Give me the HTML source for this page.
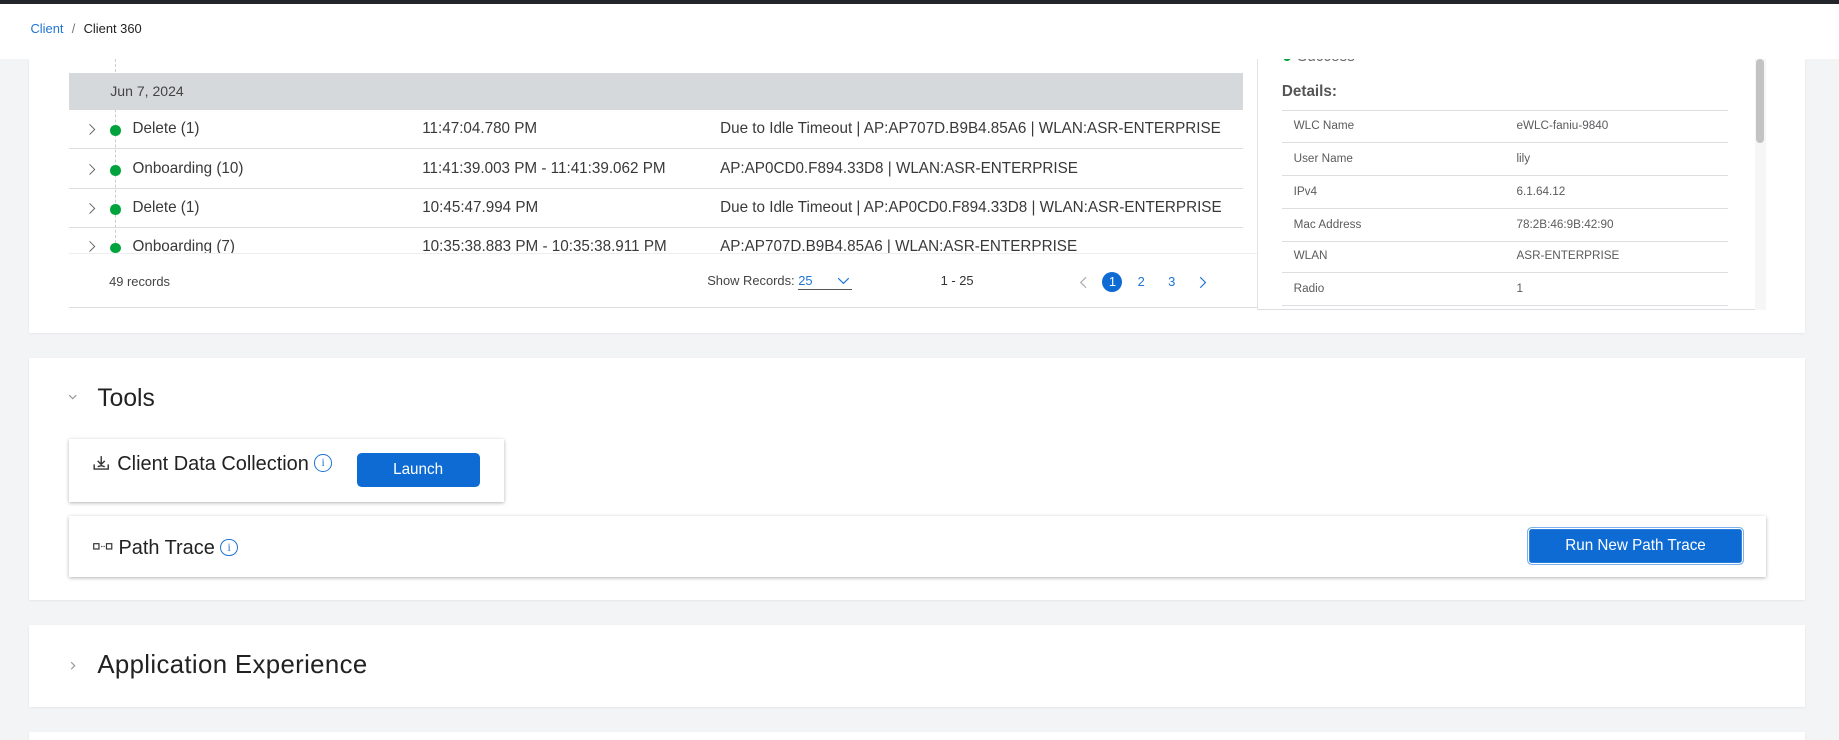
<!DOCTYPE html>
<html><head><meta charset="utf-8"><style>
*{box-sizing:border-box;margin:0;padding:0}
html,body{width:1839px;height:740px;overflow:hidden;background:#f3f4f6}
#w{zoom:1.17283;position:relative;width:1568px;height:631px;font-family:"Liberation Sans",sans-serif;color:#39393b}
.a{position:absolute}
.card{position:absolute;background:#fff;left:25px;width:1514px;box-shadow:0 1px 2px rgba(0,0,0,.08)}
.row{position:absolute;left:59px;width:1001px;height:33px;border-bottom:1px solid #dcdee1;font-size:13px;line-height:33px}
.row span{position:absolute}
.dot{position:absolute;left:35px;top:13px;width:9px;height:9px;border-radius:50%;background:#00a33c}
.chev{position:absolute;left:16px;top:11px}
.dr{position:absolute;left:1093px;width:380px;height:28px;border-bottom:1px solid #dcdee1;font-size:10px;line-height:28px;color:#5a5b5d}
.dr span{position:absolute}
.btn{position:absolute;background:#0d6bd3;color:#fff;border-radius:4px;font-size:13px;text-align:center}
.info{display:inline-block;width:15px;height:15px;border:1.3px solid #1f74d4;border-radius:50%;color:#1f74d4;font-size:10px;line-height:13px;text-align:center;font-family:"Liberation Serif",serif;vertical-align:3px}
</style></head><body><div id="w">
<div class="card" style="top:50px;height:234px"></div>
<div class="a" style="left:0;top:0;width:1568px;height:3px;background:#22262b"></div>
<div class="a" style="left:1072px;top:50px;width:434px;height:214px;border-left:1px solid #e3e4e6;border-bottom:1px solid #dcdee1;background:#fff"></div>
<div class="a" style="left:1106px;top:41px;font-size:13px;color:#666">Success</div>
<div class="a" style="left:1094px;top:45px;width:7px;height:7px;border-radius:50%;background:#00a33c"></div>
<div class="a" style="left:0;top:3px;width:1568px;height:47px;background:#fff"></div>
<div class="a" style="left:26px;top:18px;font-size:11px"><span style="color:#1f74d4">Client</span> <span style="color:#777;margin:0 4px">/</span> <span style="color:#222">Client 360</span></div>

<div class="a" style="left:59px;top:50px;width:1001px;height:166px;background:#fff"></div>
<div class="a" style="left:98px;top:50px;width:0;height:166px;border-left:1px dashed #ccc"></div>
<div class="a" style="left:59px;top:62px;width:1001px;height:32px;background:#d6d9dc;font-size:12px;line-height:32px;padding-left:35px;color:#444">Jun 7, 2024</div>
<svg width="0" height="0" style="position:absolute"><defs><symbol id="cv" viewBox="0 0 8 12"><path d="M1.5 1l5 5-5 5" fill="none" stroke="#666" stroke-width="1"/></symbol></defs></svg>
<div class="row" style="top:94px"><svg class="chev" width="7" height="11"><use href="#cv"/></svg><i class="dot"></i><span style="left:54px">Delete (1)</span><span style="left:301px">11:47:04.780 PM</span><span style="left:555px">Due to Idle Timeout | AP:AP707D.B9B4.85A6 | WLAN:ASR-ENTERPRISE</span></div>
<div class="row" style="top:128px"><svg class="chev" width="7" height="11"><use href="#cv"/></svg><i class="dot"></i><span style="left:54px">Onboarding (10)</span><span style="left:301px">11:41:39.003 PM - 11:41:39.062 PM</span><span style="left:555px">AP:AP0CD0.F894.33D8 | WLAN:ASR-ENTERPRISE</span></div>
<div class="row" style="top:161px"><svg class="chev" width="7" height="11"><use href="#cv"/></svg><i class="dot"></i><span style="left:54px">Delete (1)</span><span style="left:301px">10:45:47.994 PM</span><span style="left:555px">Due to Idle Timeout | AP:AP0CD0.F894.33D8 | WLAN:ASR-ENTERPRISE</span></div>
<div class="a" style="left:59px;top:194px;width:1001px;height:22px;overflow:hidden"><div class="row" style="left:0;top:0;border:0"><svg class="chev" width="7" height="11"><use href="#cv"/></svg><i class="dot"></i><span style="left:54px">Onboarding (7)</span><span style="left:301px">10:35:38.883 PM - 10:35:38.911 PM</span><span style="left:555px">AP:AP707D.B9B4.85A6 | WLAN:ASR-ENTERPRISE</span></div></div>
<div class="a" style="left:59px;top:216px;width:1013px;height:47px;border-bottom:1px solid #dcdee1;border-top:1px solid #eee;font-size:11px"></div>
<div class="a" style="left:93px;top:234px;font-size:11px;color:#444">49 records</div>
<div class="a" style="left:603px;top:233px;font-size:11px;color:#444">Show Records: <span style="color:#1f74d4;display:inline-block;width:46px;border-bottom:1px solid #555;padding-bottom:1px;position:relative">25 <svg style="position:absolute;right:2px;top:3px" width="11" height="7"><path d="M1 1l4.5 4.5L10 1" fill="none" stroke="#1f74d4"/></svg></span></div>
<div class="a" style="left:802px;top:233px;font-size:11px;color:#333">1 - 25</div>
<svg class="a" style="left:920px;top:235px" width="7" height="11"><path d="M6 1L1.5 5.5 6 10" fill="none" stroke="#aaa"/></svg>
<div class="a" style="left:940px;top:232px;width:17px;height:17px;border-radius:50%;background:#0d6bd3;color:#fff;font-size:11px;text-align:center;line-height:17px">1</div>
<div class="a" style="left:970px;top:234px;font-size:11px;color:#1f74d4">2</div>
<div class="a" style="left:996px;top:234px;font-size:11px;color:#1f74d4">3</div>
<svg class="a" style="left:1022px;top:235px" width="7" height="11"><path d="M1 1l4.5 4.5L1 10" fill="none" stroke="#1f74d4"/></svg>

<div class="a" style="left:1093px;top:71px;font-size:13px;font-weight:bold;color:#555">Details:</div>
<div class="a" style="left:1093px;top:94px;width:380px;border-top:1px solid #dcdee1"></div>
<div class="dr" style="top:94px"><span style="left:10px">WLC Name</span><span style="left:200px">eWLC-faniu-9840</span></div>
<div class="dr" style="top:122px"><span style="left:10px">User Name</span><span style="left:200px">lily</span></div>
<div class="dr" style="top:150px"><span style="left:10px">IPv4</span><span style="left:200px">6.1.64.12</span></div>
<div class="dr" style="top:178px"><span style="left:10px">Mac Address</span><span style="left:200px">78:2B:46:9B:42:90</span></div>
<div class="dr" style="top:205px"><span style="left:10px">WLAN</span><span style="left:200px">ASR-ENTERPRISE</span></div>
<div class="dr" style="top:233px"><span style="left:10px">Radio</span><span style="left:200px">1</span></div>
<div class="a" style="left:1496px;top:50px;width:10px;height:214px;background:#f6f6f6"></div>
<div class="a" style="left:1497px;top:50px;width:7px;height:72px;border-radius:4px;background:#c3c3c3"></div>

<div class="card" style="top:305px;height:207px"></div>
<svg class="a" style="left:58px;top:336px" width="8" height="5"><path d="M1 1l3 3 3-3" fill="none" stroke="#999"/></svg>
<div class="a" style="left:83px;top:328px;font-size:21px;font-weight:300;color:#222">Tools</div>
<div class="a" style="left:59px;top:374px;width:371px;height:54px;background:#fff;box-shadow:0 1px 3px rgba(0,0,0,.3)"></div>
<svg class="a" style="left:79px;top:388px" width="14" height="13"><path d="M7 1v7M4 5l3 3 3-3M1 8v4h12V8M4 10l3-1 3 1" fill="none" stroke="#333" stroke-width="1.2"/></svg>
<div class="a" style="left:100px;top:386px;font-size:17px;color:#222">Client Data Collection <span class="info">i</span></div>
<div class="btn" style="left:304px;top:386px;width:105px;height:29px;line-height:29px">Launch</div>
<div class="a" style="left:59px;top:440px;width:1447px;height:52px;background:#fff;box-shadow:0 1px 3px rgba(0,0,0,.3)"></div>
<svg class="a" style="left:79px;top:463px" width="17" height="7"><rect x="0.6" y="0.6" width="4.5" height="4.5" fill="none" stroke="#333"/><rect x="11.5" y="0.6" width="4.5" height="4.5" fill="none" stroke="#333"/><path d="M7 3h1M9 3h1" stroke="#333"/></svg>
<div class="a" style="left:101px;top:458px;font-size:17px;color:#222">Path Trace <span class="info">i</span></div>
<div class="btn" style="left:1302px;top:449px;width:185px;height:33px;line-height:31px;border:1.5px solid #7fb2ec;box-shadow:inset 0 0 0 1px #fff">Run New Path Trace</div>

<div class="card" style="top:533px;height:70px"></div>
<svg class="a" style="left:60px;top:564px" width="5" height="8"><path d="M1 1l3 3-3 3" fill="none" stroke="#999"/></svg>
<div class="a" style="left:83px;top:555px;font-size:22px;font-weight:300;color:#222;letter-spacing:0.3px">Application Experience</div>
<div class="card" style="top:624px;height:20px"></div>
</div></body></html>
